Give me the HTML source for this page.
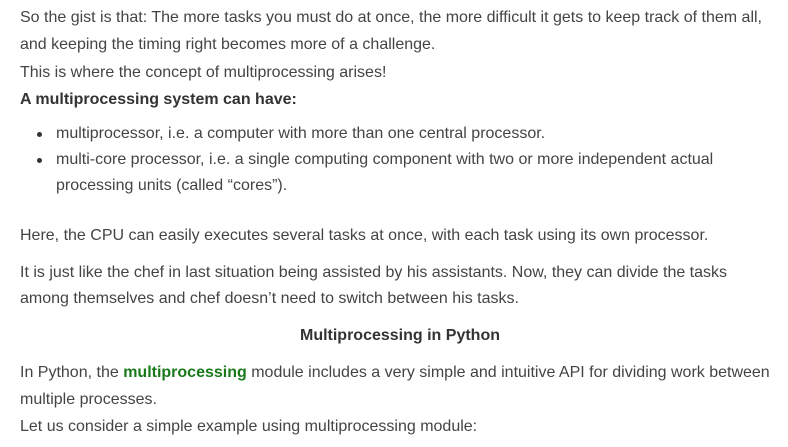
<!DOCTYPE html>
<html><head><meta charset="utf-8"><style>
body{margin:0;width:788px;height:447px;background:#fff;position:relative;overflow:hidden;font-family:"Liberation Sans",Arial,sans-serif;font-size:16px;color:#444;}
.l{position:absolute;left:20px;height:20px;line-height:20px;white-space:nowrap;}
.b{font-weight:bold;color:#333;}
.g{color:#1a7a1a;font-weight:bold;}
.dot{position:absolute;left:37px;width:5px;height:5px;border-radius:50%;background:#333;}
</style></head><body>
<div class="l" style="top:8px">So the gist is that: The more tasks you must do at once, the more difficult it gets to keep track of them all,</div>
<div class="l" style="top:35px">and keeping the timing right becomes more of a challenge.</div>
<div class="l" style="top:63px">This is where the concept of multiprocessing arises!</div>
<div class="l b" style="top:90px">A multiprocessing system can have:</div>
<div class="dot" style="top:132px"></div>
<div class="l" style="top:124px;left:56px">multiprocessor, i.e. a computer with more than one central processor.</div>
<div class="dot" style="top:158px"></div>
<div class="l" style="top:150px;left:56px">multi-core processor, i.e. a single computing component with two or more independent actual</div>
<div class="l" style="top:176px;left:56px">processing units (called “cores”).</div>
<div class="l" style="top:226px">Here, the CPU can easily executes several tasks at once, with each task using its own processor.</div>
<div class="l" style="top:263px">It is just like the chef in last situation being assisted by his assistants. Now, they can divide the tasks</div>
<div class="l" style="top:289px">among themselves and chef doesn’t need to switch between his tasks.</div>
<div class="l b" style="top:326px;left:0;width:800px;text-align:center">Multiprocessing in Python</div>
<div class="l" style="top:363px">In Python, the <span class="g">multiprocessing</span> module includes a very simple and intuitive API for dividing work between</div>
<div class="l" style="top:390px">multiple processes.</div>
<div class="l" style="top:417px">Let us consider a simple example using multiprocessing module:</div>
</body></html>
